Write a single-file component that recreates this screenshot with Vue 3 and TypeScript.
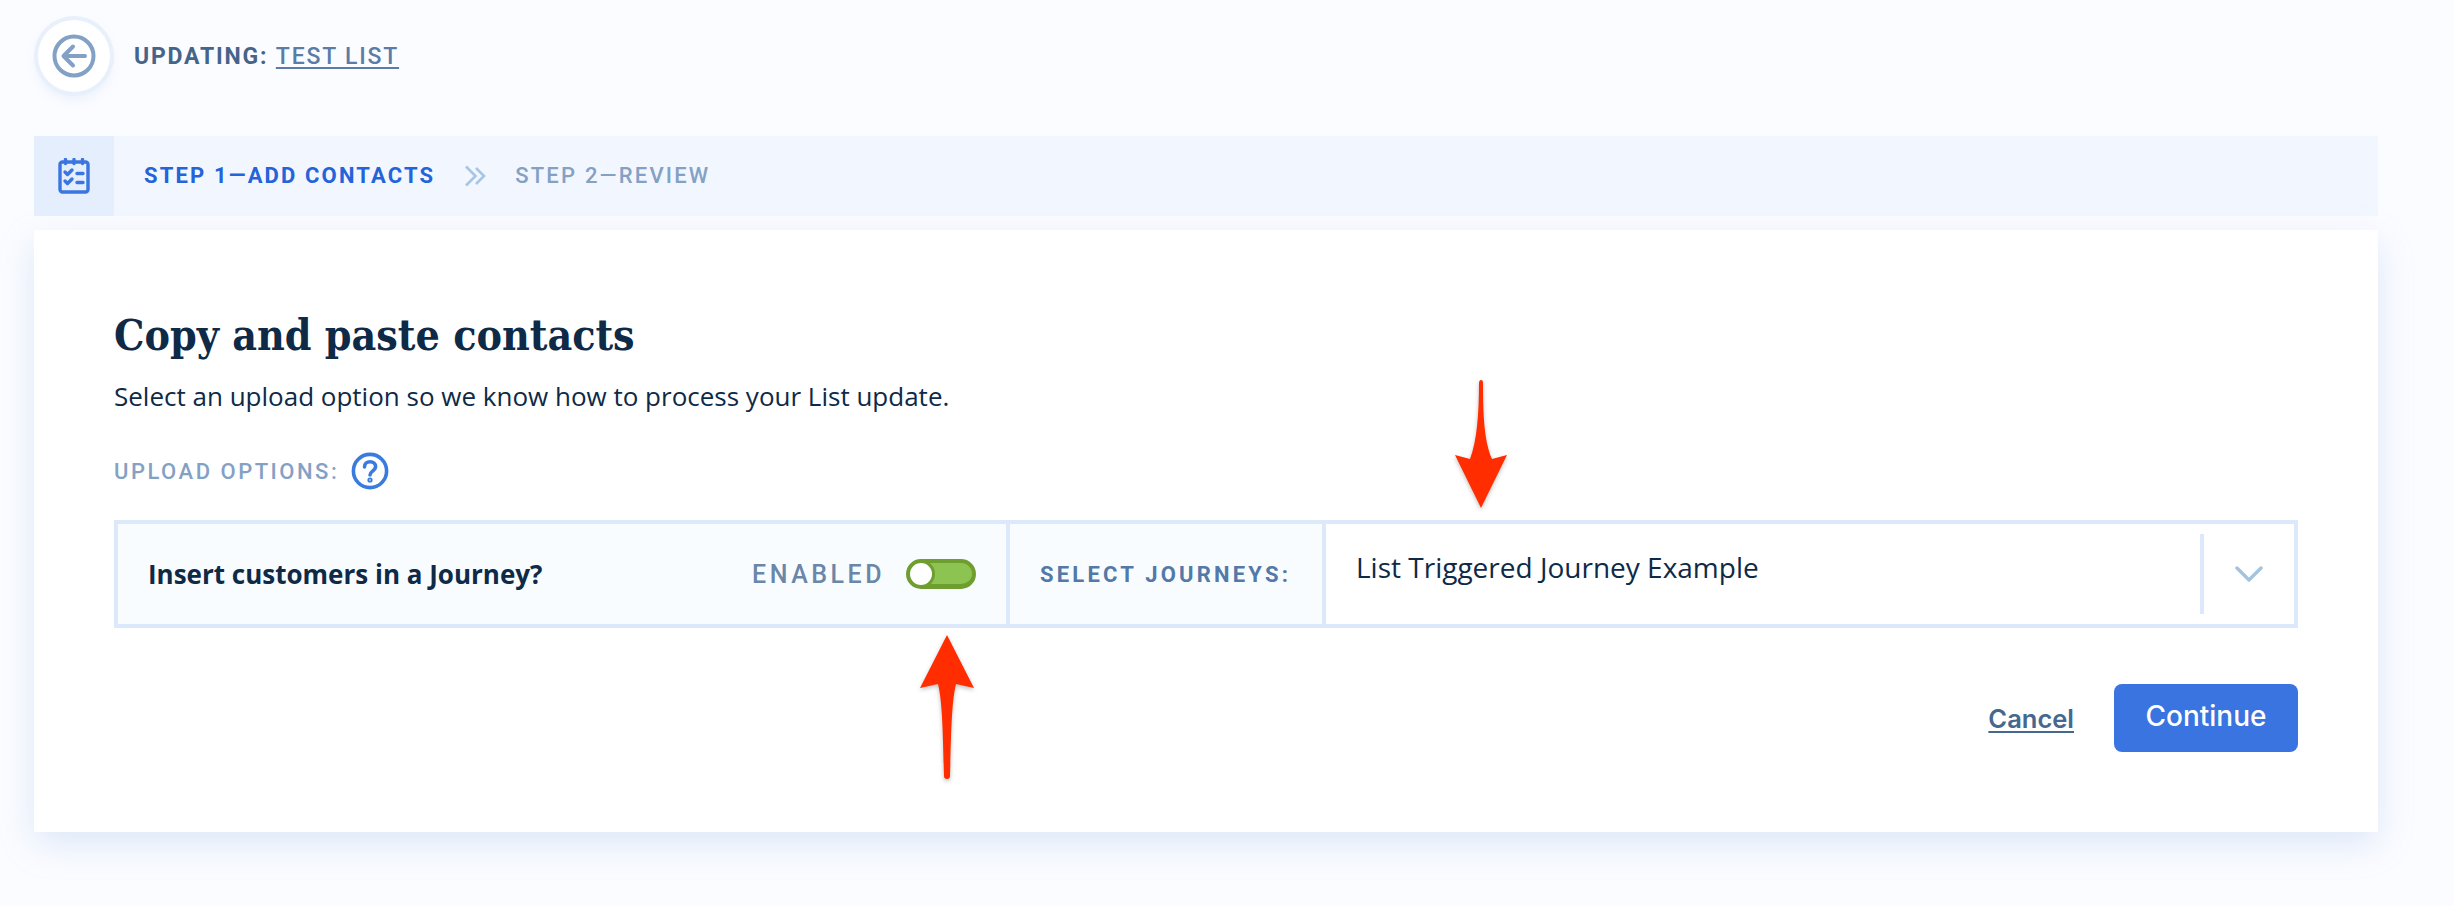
<script setup lang="ts">
import { ref } from 'vue';

const journey = ref('List Triggered Journey Example');
const enabled = ref(true);
</script>

<template>
  <div class="page">
    <header class="top">
      <button class="back">
        <svg width="48" height="48" viewBox="0 0 48 48" fill="none" stroke="#83a1c4" stroke-width="4" stroke-linecap="round" stroke-linejoin="round">
          <circle cx="24" cy="24" r="19.5" />
          <path d="M35 24H14M23 14.5 13.5 24l9.5 9.5" />
        </svg>
      </button>
      <div class="updating">UPDATING: <a class="list-link">TEST LIST</a></div>
    </header>

    <nav class="steps">
      <div class="step-icon">
        <svg width="32" height="36" viewBox="0 0 32 36" fill="none" stroke="#3a75e0" stroke-width="3.4" stroke-linecap="round" stroke-linejoin="round">
          <rect x="2" y="4" width="28" height="30" rx="2.5" />
          <path d="M7.5 1.5v4M16 1.5v4M24.5 1.5v4" />
          <path d="M7 14l2.5 2.5L14 12M7 23l2.5 2.5L14 21" />
          <path d="M19 15.5h6M19 24.5h6" />
        </svg>
      </div>
      <span class="step active">STEP 1—ADD CONTACTS</span>
      <svg class="chev" width="22" height="22" viewBox="0 0 22 22" fill="none" stroke="#a9c5e4" stroke-width="2.6">
        <path d="M1 1.5 10.5 11 1 20.5M11 3l8 8-8 8" />
      </svg>
      <span class="step">STEP 2—REVIEW</span>
    </nav>

    <main class="card">
      <h1 class="title">Copy and paste contacts</h1>
      <p class="desc">Select an upload option so we know how to process your List update.</p>
      <div class="options-label">
        <span>UPLOAD OPTIONS:</span>
        <svg width="38" height="38" viewBox="0 0 38 38" fill="none" stroke="#3a7be0" stroke-width="3.6" stroke-linecap="round">
          <circle cx="19" cy="19" r="16.6" />
          <path d="M13.5 15c0-3.2 2.4-5.2 5.6-5.2s5.5 2 5.5 4.8c0 4.4-5.6 4.6-5.6 8.4" />
          <circle cx="19" cy="28" r="0.8" fill="#3a7be0" />
        </svg>
      </div>

      <div class="table">
        <div class="cell insert">
          <strong>Insert customers in a Journey?</strong>
          <span class="enabled">ENABLED</span>
          <span class="toggle" :class="{ on: enabled }"><i></i></span>
        </div>
        <div class="cell select-label">SELECT JOURNEYS:</div>
        <div class="cell select">
          <span class="value">{{ journey }}</span>
          <span class="select-arrow">
            <svg width="28" height="18" viewBox="0 0 28 18" fill="none" stroke="#a3c3de" stroke-width="3.4" stroke-linecap="round" stroke-linejoin="round">
              <path d="M2 3l12 12L26 3" />
            </svg>
          </span>
        </div>
      </div>

      <div class="actions">
        <a class="cancel">Cancel</a>
        <button class="continue">Continue</button>
      </div>
    </main>

    <!-- annotation arrows on top of the screenshot -->
    <svg class="arrow arrow-down" width="60" height="140" viewBox="0 0 60 140">
      <path d="M30 2c1.5 0 2 1 2 3 0 30 1 58 9 76l15-4-26 53L4 77l15 4c7-18 9-46 9-76 0-2 1-3 2-3z" />
    </svg>
    <svg class="arrow arrow-up" width="60" height="150" viewBox="0 0 60 150">
      <path d="M30 2l27 53-18-4c-5 20-5 60-6 92 0 2-1 3-3 3s-3-1-3-3c-1-32-1-72-6-92L3 55z" />
    </svg>
  </div>
</template>

<style scoped>
.page {
  position: relative;
  min-height: 906px;
  padding: 0 76px 0 34px;
  box-sizing: border-box;
  background: #fbfcff;
  overflow: hidden;
}

.top {
  display: flex;
  align-items: center;
  gap: 24px;
  height: 112px;
  padding-left: 4px;
  margin-bottom: 24px;
}

.back {
  display: flex;
  align-items: center;
  justify-content: center;
  width: 72px;
  height: 72px;
  padding: 0;
  border: none;
  border-radius: 50%;
  background: #fff;
  box-shadow: 0 0 0 4px #e8f0fb, 0 6px 14px rgba(120, 160, 220, 0.16);
}

.updating {
  font-family: Roboto, sans-serif;
  font-weight: 700;
  font-size: 23px;
  letter-spacing: 1.8px;
  color: #46648a;
}

.list-link {
  font-weight: 500;
  color: #5a7ca6;
  text-decoration: underline;
  text-underline-offset: 3px;
}

.steps {
  display: flex;
  align-items: center;
  height: 80px;
  background: #f2f7ff;
}

.step-icon {
  display: flex;
  align-items: center;
  justify-content: center;
  width: 80px;
  height: 80px;
  margin-right: 30px;
  background: #e4eefd;
}

.step {
  margin-top: -2px;
  font-family: Roboto, sans-serif;
  font-weight: 500;
  font-size: 22px;
  letter-spacing: 2.2px;
  color: #84a1c4;
}

.step.active {
  font-weight: 700;
  letter-spacing: 2.15px;
  color: #2563d9;
}

.chev {
  margin: 0 28px 0 30px;
}

.card {
  height: 602px;
  margin-top: 14px;
  padding: 79px 80px 0;
  box-sizing: border-box;
  background: #fff;
  box-shadow: 0 12px 34px rgba(120, 160, 225, 0.22);
}

.title {
  margin: 0;
  font-family: "DejaVu Serif Condensed", "DejaVu Serif", serif;
  font-stretch: condensed;
  font-weight: 700;
  font-size: 42.5px;
  line-height: 52px;
  color: #0e2a47;
}

.desc {
  margin: 18px 0 0;
  font-family: "Open Sans", sans-serif;
  font-size: 26px;
  line-height: 34px;
  color: #0e2a47;
}

.options-label {
  display: flex;
  align-items: center;
  gap: 12px;
  margin-top: 39px;
  height: 38px;
  font-family: Roboto, sans-serif;
  font-weight: 500;
  font-size: 22px;
  letter-spacing: 2.5px;
  color: #84a1c4;
}

.table {
  display: flex;
  height: 108px;
  margin-top: 30px;
  border: 4px solid #dce9fa;
  box-sizing: border-box;
}

.cell {
  display: flex;
  align-items: center;
  box-sizing: border-box;
  background: #f9fcfe;
}

.insert {
  width: 892px;
  padding: 0 30px 0 30px;
  border-right: 4px solid #dce9fa;
  font-family: "Open Sans", sans-serif;
  color: #0e2a47;
}

.insert strong {
  flex: 1;
  font-weight: 700;
  font-size: 26px;
}

.enabled {
  margin-right: 21px;
  font-family: Roboto, sans-serif;
  font-weight: 500;
  font-size: 25px;
  letter-spacing: 3.5px;
  color: #6a86a9;
}

.toggle {
  display: block;
  position: relative;
  width: 70px;
  height: 30px;
  box-sizing: border-box;
  border: 4px solid #6f9e30;
  border-bottom-width: 5px;
  border-radius: 15px;
  background: #8dc451;
}

.toggle i {
  position: absolute;
  left: -3px;
  top: -3px;
  width: 22px;
  height: 22px;
  border: 3px solid #6f9e30;
  border-radius: 50%;
  background: #fff;
}

.select-label {
  width: 316px;
  padding-left: 30px;
  border-right: 4px solid #dce9fa;
  font-family: Roboto, sans-serif;
  font-weight: 700;
  font-size: 22px;
  letter-spacing: 3.2px;
  color: #5279a8;
}

.select {
  flex: 1;
  justify-content: space-between;
  padding-left: 30px;
  background: #fff;
}

.value {
  margin-top: -14px;
  font-family: "Open Sans", sans-serif;
  font-size: 28px;
  color: #0e2a47;
}

.select-arrow {
  display: flex;
  align-items: center;
  justify-content: center;
  width: 94px;
  height: 80px;
  box-sizing: border-box;
  border-left: 4px solid #dce9fa;
}

.actions {
  display: flex;
  justify-content: flex-end;
  align-items: center;
  gap: 40px;
  margin-top: 56px;
}

.cancel {
  font-family: Inter, sans-serif;
  font-weight: 600;
  font-size: 25.5px;
  color: #46688f;
  text-decoration: underline;
  text-underline-offset: 3px;
}

.continue {
  width: 184px;
  height: 68px;
  padding: 0 0 4px;
  border: none;
  border-radius: 8px;
  background: #3a74e0;
  color: #fff;
  font-family: Inter, sans-serif;
  font-weight: 500;
  font-size: 28px;
}

.arrow {
  position: absolute;
  fill: #ff2d00;
  filter: drop-shadow(0 2px 2px rgba(0, 0, 0, 0.25));
}

.arrow-down {
  left: 1451px;
  top: 378px;
}

.arrow-up {
  left: 917px;
  top: 633px;
}
</style>

<style>
body {
  margin: 0;
  background: #fbfcff;
}
</style>
